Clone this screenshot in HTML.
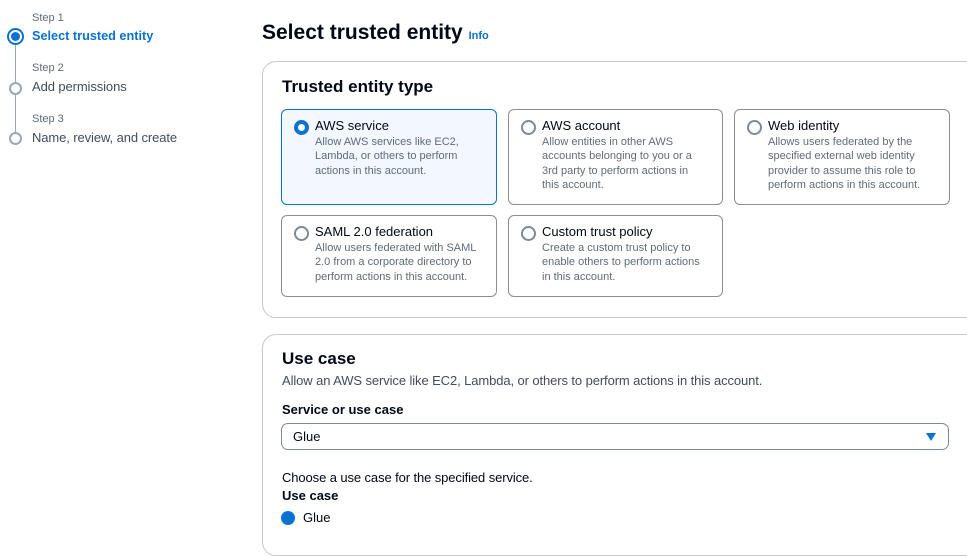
<!DOCTYPE html>
<html><head><style>
body{margin:0;width:967px;height:516px;overflow:hidden;background:#fff;font-family:"Liberation Sans",sans-serif;color:#000716;position:relative}
.a{position:absolute}
.stepl{font-size:11px;color:#5f6b7a}
.stept{font-size:13px;color:#414d5c;letter-spacing:-0.1px}
.circ{width:9px;height:9px;border:2px solid #9ba7b6;border-radius:50%;background:#fff}
.panel{position:absolute;left:262px;width:720px;border:1px solid #c6c6cd;border-radius:14px;background:#fff}
.card{position:absolute;border:1px solid #8c8c94;border-radius:6px;box-sizing:border-box;background:#fff}
.card.sel{border:1px solid #0972d3;background:#f2f8fd}
.card .r{position:absolute;left:12px;top:10px;width:11px;height:11px;border:2px solid #7d8998;border-radius:50%;background:#fff}
.card.sel .r{border:4px solid #0972d3;width:7px;height:7px}
.card .t{position:absolute;left:33px;top:8px;font-size:13px;color:#000716}
.card .d{position:absolute;left:33px;top:25px;font-size:11px;line-height:14.3px;color:#5f6b7a;right:14px}
</style></head><body>
<div class="a" style="left:15px;top:44px;width:1px;height:88px;background:#9ba7b6"></div>
<div class="a stepl" style="left:32px;top:12px">Step 1</div>
<div class="a" style="left:7px;top:28px;width:13px;height:13px;border:2px solid #0972d3;border-radius:50%;background:#fff"></div>
<div class="a" style="left:11px;top:32px;width:9px;height:9px;border-radius:50%;background:#0972d3"></div>
<div class="a" style="left:32px;top:29px;font-size:12.7px;font-weight:bold;color:#0972d3">Select trusted entity</div>
<div class="a stepl" style="left:32px;top:62px">Step 2</div>
<div class="a circ" style="left:9px;top:82px"></div>
<div class="a stept" style="left:32px;top:79px">Add permissions</div>
<div class="a stepl" style="left:32px;top:113px">Step 3</div>
<div class="a circ" style="left:9px;top:132px"></div>
<div class="a stept" style="left:32px;top:130px">Name, review, and create</div>

<div class="a" style="left:262px;top:21px;font-size:21px;font-weight:bold">Select trusted entity <span style="font-size:11px;color:#0972d3">Info</span></div>

<div class="panel" style="top:61px;height:255px"></div>
<div class="a" style="left:282px;top:77px;font-size:17px;font-weight:bold">Trusted entity type</div>
<div class="card sel" style="left:281px;top:109px;width:216px;height:96px"><div class="r"></div><div class="t">AWS service</div><div class="d">Allow AWS services like EC2, Lambda, or others to perform actions in this account.</div></div>
<div class="card" style="left:508px;top:109px;width:215px;height:96px"><div class="r"></div><div class="t">AWS account</div><div class="d" style="right:20px">Allow entities in other AWS accounts belonging to you or a 3rd party to perform actions in this account.</div></div>
<div class="card" style="left:734px;top:109px;width:216px;height:96px"><div class="r"></div><div class="t">Web identity</div><div class="d">Allows users federated by the specified external web identity provider to assume this role to perform actions in this account.</div></div>
<div class="card" style="left:281px;top:215px;width:216px;height:82px"><div class="r"></div><div class="t">SAML 2.0 federation</div><div class="d">Allow users federated with SAML 2.0 from a corporate directory to perform actions in this account.</div></div>
<div class="card" style="left:508px;top:215px;width:215px;height:82px"><div class="r"></div><div class="t">Custom trust policy</div><div class="d" style="right:20px">Create a custom trust policy to enable others to perform actions in this account.</div></div>

<div class="panel" style="top:334px;height:220px"></div>
<div class="a" style="left:282px;top:349px;font-size:17px;font-weight:bold">Use case</div>
<div class="a" style="left:282px;top:373px;font-size:13px;color:#414d5c;letter-spacing:-0.1px">Allow an AWS service like EC2, Lambda, or others to perform actions in this account.</div>
<div class="a" style="left:282px;top:402px;font-size:13px;font-weight:bold">Service or use case</div>
<div class="a" style="left:281px;top:423px;width:668px;height:27px;border:1px solid #7d8998;border-radius:7px;box-sizing:border-box"></div>
<div class="a" style="left:293px;top:429px;font-size:13px">Glue</div>
<div class="a" style="left:926px;top:433px;width:0;height:0;border-left:5px solid transparent;border-right:5px solid transparent;border-top:8px solid #0972d3"></div>
<div class="a" style="left:282px;top:470px;font-size:13px;color:#000716;letter-spacing:-0.1px">Choose a use case for the specified service.</div>
<div class="a" style="left:282px;top:488px;font-size:13px;font-weight:bold">Use case</div>
<div class="a" style="left:281px;top:511px;width:14px;height:14px;border-radius:50%;background:#0972d3"></div>
<div class="a" style="left:303px;top:510px;font-size:13px">Glue</div>
</body></html>
